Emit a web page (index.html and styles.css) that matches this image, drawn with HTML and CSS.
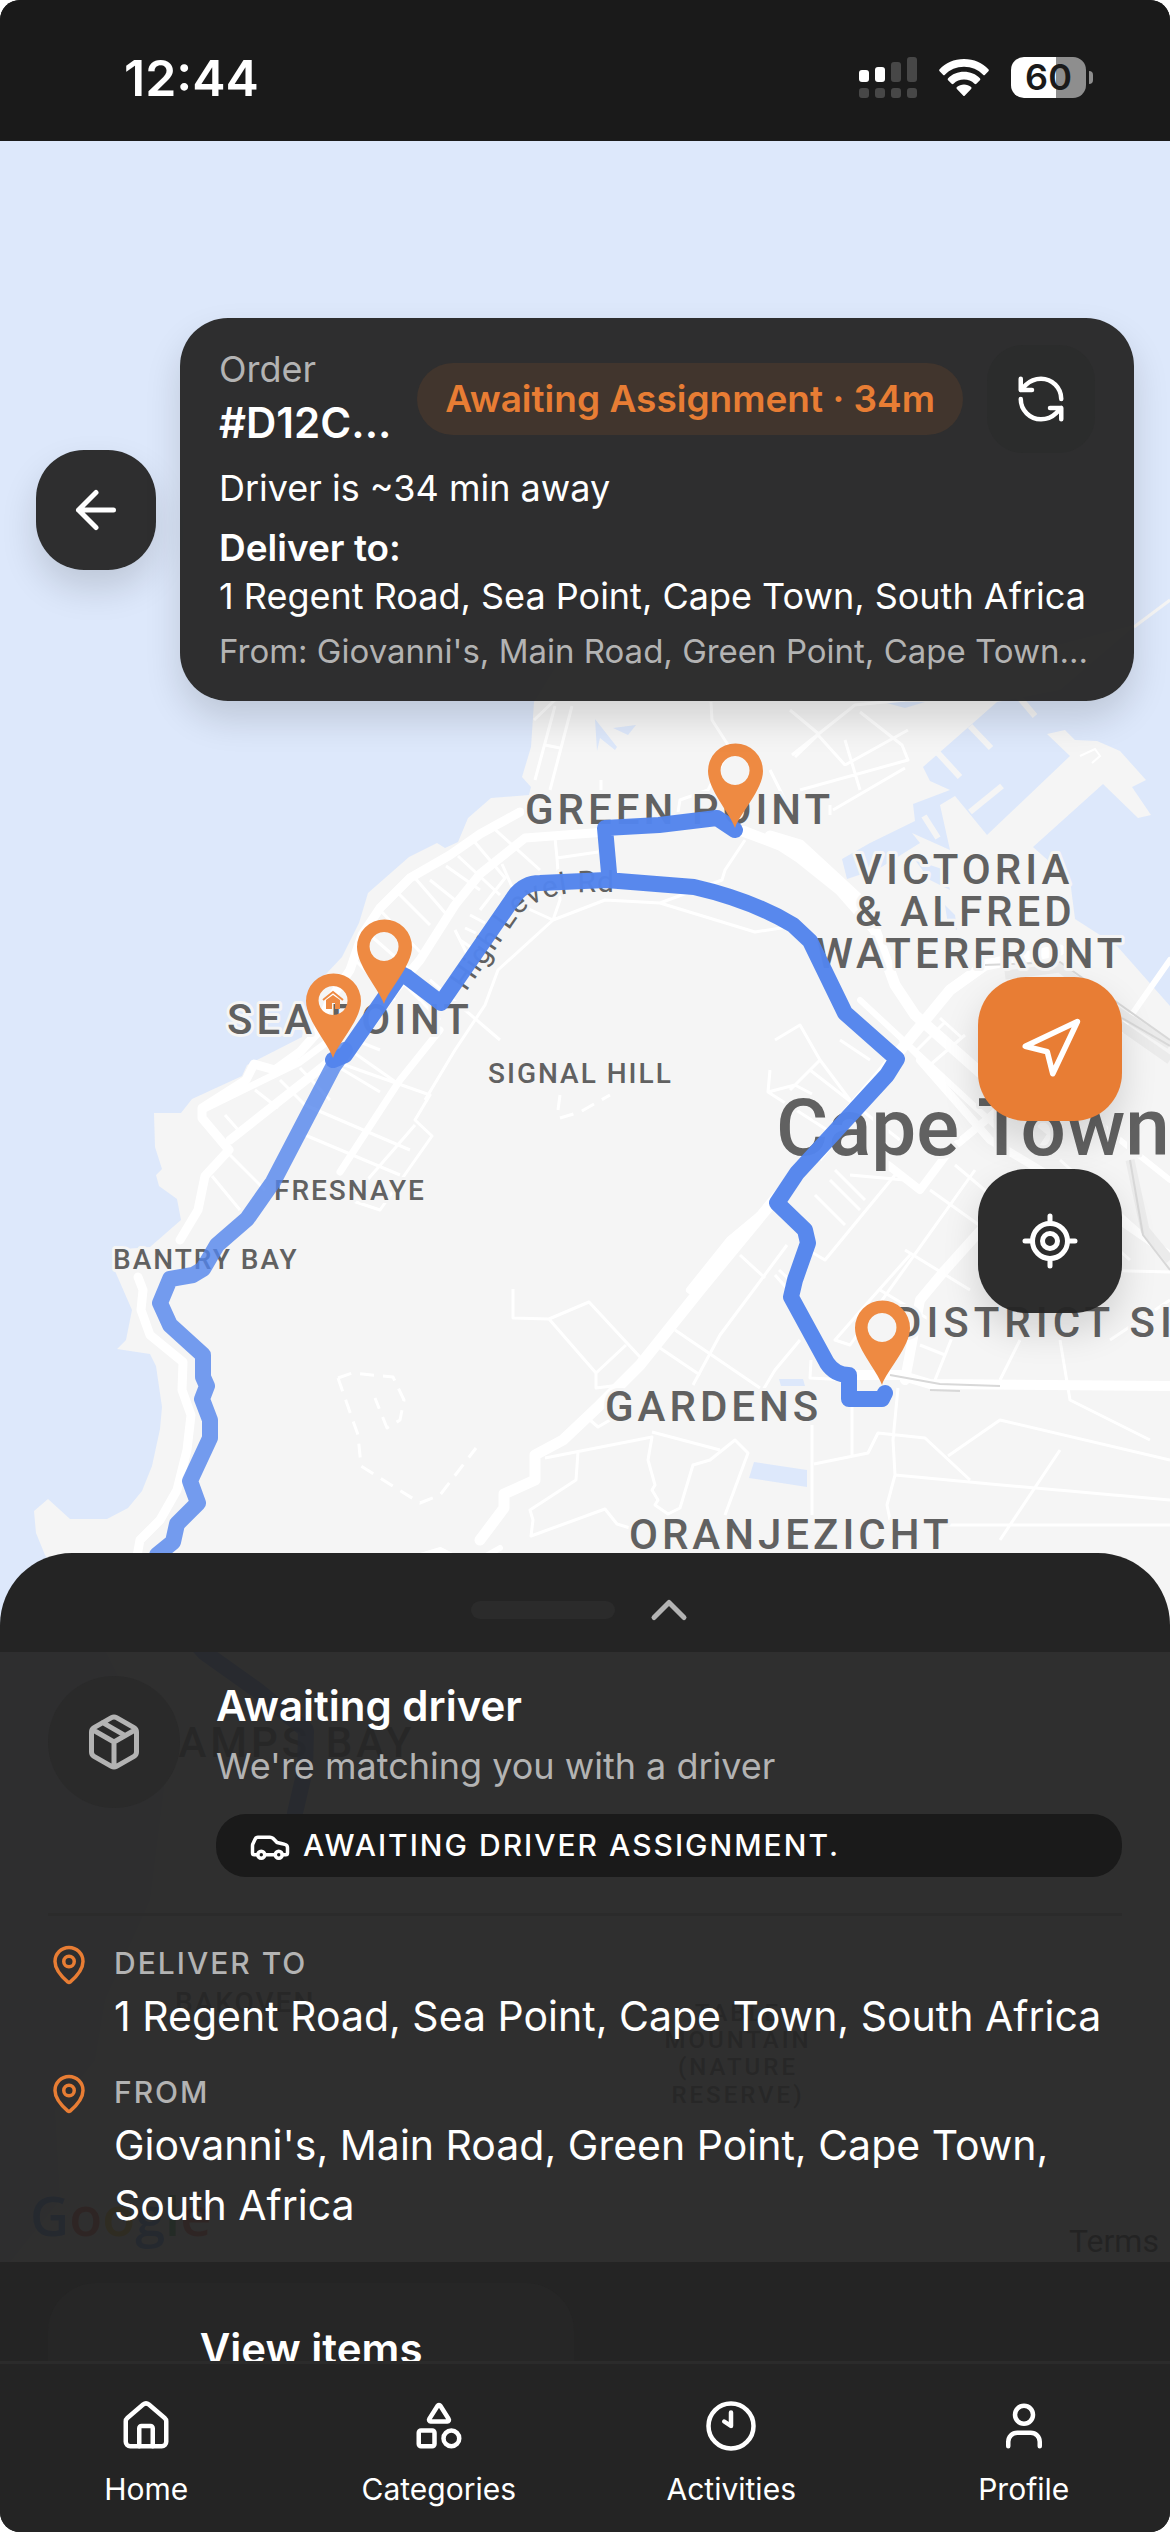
FILE: index.html
```html
<!DOCTYPE html>
<html lang="en">
<head>
  <meta charset="UTF-8">
  <meta name="viewport" content="width=device-width, initial-scale=1.0">
  <title>Track Order</title>
  <link rel="stylesheet" href="styles.css">
</head>
<body>
  <div class="app">
    <header class="status-bar">
      <span class="time">12:44</span>
      <div class="status-icons">
        <svg width="58" height="42" viewBox="0 0 58 42">
          <g fill="#fff">
            <rect x="0" y="13" width="10" height="12" rx="3"/>
            <rect x="16" y="10" width="10" height="15" rx="3"/>
          </g>
          <g fill="#474747">
            <rect x="32" y="5" width="10" height="20" rx="3"/>
            <rect x="48" y="0" width="10" height="25" rx="3"/>
            <rect x="0" y="31" width="10" height="10" rx="3"/>
            <rect x="16" y="31" width="10" height="10" rx="3"/>
            <rect x="32" y="31" width="10" height="10" rx="3"/>
            <rect x="48" y="31" width="10" height="10" rx="3"/>
          </g>
        </svg>
        <svg width="50" height="38" viewBox="0 0 50 38" fill="#fff">
          <path d="M25 0C15 0 6.500 4 .6 10.300a1.500 1.500 0 0 0 0 2l3.400 3.400a1.300 1.300 0 0 0 1.900 0C10.800 10.700 17.500 7.800 25 7.800s14.200 2.900 19.100 7.900a1.300 1.300 0 0 0 1.900 0l3.400-3.400a1.500 1.500 0 0 0 0-2C43.500 4 35 0 25 0z"/>
          <path d="M25 12.800c-6.200 0-11.800 2.400-15.900 6.400a1.400 1.400 0 0 0 0 2l3.500 3.500a1.400 1.400 0 0 0 1.900 0A15 15 0 0 1 25 20.500a15 15 0 0 1 10.500 4.200 1.400 1.400 0 0 0 1.900 0l3.500-3.500a1.400 1.400 0 0 0 0-2c-4.100-4-9.700-6.400-15.900-6.400z"/>
          <path d="M25 25.500c-2.700 0-5.200 1-7.100 2.600a1.200 1.200 0 0 0 0 1.800l6.200 6.500a1.200 1.200 0 0 0 1.800 0l6.200-6.500a1.200 1.200 0 0 0 0-1.800c-1.900-1.600-4.400-2.600-7.100-2.600z"/>
        </svg>
        <div class="battery"><span class="battery-level">60</span></div>
      </div>
    </header>

    <main class="tracking">
      <svg class="map" viewBox="0 141 1170 2220" preserveAspectRatio="xMidYMin slice">
        <defs>
          <path id="highLevel" d="M466 992L520 914Q544 892 590 892L650 892"/>
          <g id="pin">
            <path fill="#ee8a42" fill-rule="evenodd" d="M0 0C-5-15-27-38-27-57a27.500 27.500 0 0 1 55 0C28-38 5-15 0 0zM0-72a14.500 14.500 0 1 0 .1 0z"/>
          </g>
        </defs>

        <!-- land -->
        <path fill="#f5f5f5" d="M534 702L531 747 522 777 531 787 529 795 491 798 468 818 458 842 445 848 437 843 409 857 368 893 359 923 342 957 311 990 302 1037 247 1065 242 1076 192 1099 181 1113 154 1113 155 1147 162 1169 156 1175 159 1186 177 1199 181 1220 150 1247 112 1250 115 1271 132 1310 126 1340 117 1349 150 1354 156 1366 162 1407 160 1429 152 1466 142 1491 128 1508 107 1519 70 1519 48 1499 34 1511 36 1533 45 1555 90 1620 130 1700 165 1780 150 1900 105 2000 95 2060 55 2110 60 2200 10 2262V2361H1170V640L1134 625 1000 660H560z"/>
        <!-- sea and water -->
        <g fill="#dde8fb">
          <path d="M1170 600L1130 630 1060 690 997 702 923 767 930 781 950 790 913 804 915 821 870 843 842 859 847 879 880 868 920 843 912 833 950 850 940 805 955 796 987 835 1070 756 1047 734 1065 730 1075 740 1097 741 1120 751 1146 780 1132 787 1151 815 1138 818 1103 784 1033 847 1070 880 1075 919 1117 946 1170 1006z"/>
          <path d="M595 719L617 747 615 750 600 738 597 751zM613 728L636 725 628 735zM883 702H925L905 708z"/>
          <path d="M754 1462L807 1470V1487L749 1478zM779 1379H803L805 1386H781z"/>
          <path d="M915 860L945 870 950 890 930 880zM945 905L955 915 957 930 948 925z"/>
        </g>
        <g stroke="#f5f5f5" stroke-width="5" fill="none">
          <path d="M1018 696L1035 716M970 726L991 748M937 752L960 777M970 812L1002 786M924 816L938 838" stroke-width="6"/>
          <path d="M1080 756L1095 749 1100 756 1092 763" stroke="#fff" stroke-width="2"/>
          <path d="M1134 627L1170 600" stroke-width="3"/>
        </g>

        <!-- main roads -->
        <g fill="none" stroke="#fff" stroke-linejoin="round" stroke-linecap="round">
          <path stroke-width="9" d="M520 812L480 834 450 855 410 878 380 908 362 935 350 970 330 1000 316 1034 300 1052 275 1070 254 1064 246 1080 202 1108 202 1118 229 1150 205 1176 198 1210 180 1240M138 1277L143 1290 141 1310 150 1335 183 1362 182 1390 191 1415 187 1450 177 1490 160 1520 140 1540 137 1556"/>
          <path stroke-width="9" d="M606 832L525 838 480 874 455 905 420 960 395 990 360 1040 325 1065 230 1140"/>
          <path stroke-width="7" d="M440 1030L400 1080 340 1172M202 1110L300 1062 330 1040"/>
          <path stroke-width="11" d="M740 830L780 845 800 858 840 890 875 930 895 985 915 1015 1000 1090 1050 1130M770 836L800 845 865 905"/>
          <path stroke-width="11" d="M480 1540L504 1508V1494L535 1480 535 1455 563 1440 600 1405 640 1365 700 1290 770 1205 880 1075 950 990 985 965 1060 950"/>
          <path stroke-width="8" d="M690 1290L730 1240 760 1215M888 1165L920 1190 950 1150 1010 1100M1170 1255L1090 1200 990 1140 920 1060"/>
          <path stroke-width="10" d="M850 1375H900L930 1384 1170 1386M905 1380L920 1300 945 1270 990 1220 1060 1180"/>
          <path stroke-width="6" d="M1170 960L1100 1060 1040 1150M1020 1060L1170 1180M860 1000L1000 1130M400 1562L440 1550 470 1565 500 1548"/>
        </g>

        <!-- streets -->
        <g fill="none" stroke="#fff" stroke-width="3" stroke-linejoin="round">
          <path d="M534 720L555 700 620 690M555 706L535 780M572 706L550 790M545 745L560 748M711 702L712 720 730 748 708 790 680 800 678 812M601 780V790M792 755L855 705 905 700M795 757L818 735 845 765M800 790L908 760 902 745 860 712M845 765L908 730M833 810L905 768M860 790L845 740M830 815V805M820 735L790 710M785 800L770 770"/>
          <path d="M490 825L540 870M473 840L505 878 480 910M458 856L500 895M446 866L480 890M430 880L455 900M415 878L447 915M398 893L430 925M380 910L420 952M370 935L410 970M355 960L395 1000M502 864L520 905 553 920 605 900 660 903 755 932 800 925M555 838L557 858 598 852M557 858L560 900 553 920M745 840L725 870 722 880 660 903M553 920L498 970 485 1005 455 1050 425 1100"/>
          <path d="M470 915L485 923M465 928L480 935M460 940L475 950M455 930L470 960M430 980L500 1040M405 985L440 1020M350 1050L400 1085M335 1065L380 1092M300 1068L330 1100M280 1080L305 1105 410 1150M325 1058L430 1095 415 1120 432 1136 380 1210 350 1200 415 1125M305 1135L400 1175M225 1115L240 1132M255 1090L278 1108M212 1176L240 1210M230 1155L265 1190M355 1040L380 1050"/>
          <path d="M770 1070L768 1092 795 1085 812 1094M768 1092L835 1135M775 1040L800 1025 820 1060 850 1100M820 1060L790 1090M810 1070L900 1140M840 1040L870 1060M860 1110L820 1160M850 1175L905 1180M830 1180L860 1210M835 1170L865 1200M815 1195L845 1225M895 1175L825 1260 808 1250M975 1170L850 1345 835 1340M930 1190L1000 1240M955 1165L1020 1220M905 1250L970 1290M880 1290L930 1320M910 1255L870 1300 835 1340 850 1345M740 1255L765 1278M787 1245L720 1335 693 1385M779 1270L795 1285M775 1275L790 1292M800 1340L775 1370 763 1390"/>
          <path d="M513 1289V1318L549 1319 589 1302 640 1357M549 1319L596 1373 626 1345M596 1373V1388L620 1385M675 1330L760 1388M660 1348L700 1375M545 1458L652 1437 648 1460 655 1485 652 1490 658 1500 655 1505 668 1514 680 1508 693 1465 710 1460 735 1440 748 1453 725 1515M578 1452L576 1480 530 1510 533 1520 531 1536 605 1509 617 1524 630 1528M652 1432L720 1450M812 1425V1515M814 1464L868 1453 878 1433 925 1438 970 1480M852 1405V1455M898 1388L893 1440 895 1475 887 1505 890 1520M895 1475L980 1483 1170 1500M948 1456L1000 1420 1170 1460M850 1380L810 1378 811 1360M590 1420L598 1427 610 1420M940 1525H1170M1000 1540L1060 1450M1020 1340L1000 1380M955 1330L935 1380M920 1345L945 1355M1060 1340L1070 1400 1150 1440"/>
          <path d="M900 1040L920 1060M930 1030L950 1050M940 1018L962 1038M915 1052L945 1022M930 1065L965 1035M1040 1180L1130 1260M1060 1160L1150 1240M1110 1340L1170 1300M1030 1250L1090 1300M1090 1270L1170 1272M560 1095L558 1110"/>
          <path stroke-dasharray="14 9" d="M338 1378L352 1373 393 1377 404 1400 400 1420 387 1428 375 1398M338 1378L358 1435 361 1466 420 1503 440 1495 476 1448M560 1118L580 1112 610 1095"/>
          <path d="M130 1660L180 1720 200 1800 170 1900 175 2060M220 1660L260 1760 200 1820M360 1660L350 1760 260 1860 230 2000"/>
        </g>
        <!-- rail lines -->
        <g fill="none" stroke="#ebebeb" stroke-width="9" stroke-linejoin="round">
          <path d="M1005 975L1060 968 1100 1000 1170 1045M1130 1160L1145 1230 1170 1260M1120 1025L1170 1060"/>
          <path stroke="#d8d8d8" stroke-width="2" d="M890 1375L940 1384 1000 1386M930 1390L960 1391M985 965L1060 962 1170 1040M1122 1018L1170 1046M1130 1160L1143 1235 1170 1270"/>
        </g>

        <g class="labels">
          <text x="525" y="824">GREEN POINT</text>
          <text x="855" y="884">VICTORIA</text>
          <text x="855" y="926">&amp; ALFRED</text>
          <text x="816" y="968">WATERFRONT</text>
          <text x="227" y="1034">SEA POINT</text>
          <text class="wide" x="894" y="1337">DISTRICT SIX</text>
          <text x="605" y="1421">GARDENS</text>
          <text x="629" y="1549">ORANJEZICHT</text>
          <text x="147" y="1757">CAMPS BAY</text>
          <text class="city" x="776" y="1155">Cape Town</text>
          <text class="small" x="488" y="1083">SIGNAL HILL</text>
          <text class="small" x="274" y="1200">FRESNAYE</text>
          <text class="small" x="113" y="1269">BANTRY BAY</text>
          <text class="small" x="175" y="2012">BAKOVEN</text>
          <g class="reserve">
            <text x="738" y="2021">TABLE</text>
            <text x="738" y="2048">MOUNTAIN</text>
            <text x="738" y="2075">(NATURE</text>
            <text x="738" y="2103">RESERVE)</text>
          </g>
          <text class="street"><textPath href="#highLevel">High Level Rd</textPath></text>
        </g>

        <!-- routes -->
        <g fill="none" stroke="#5384ec" stroke-width="16" stroke-linejoin="round" stroke-linecap="round">
          <path opacity=".8" d="M345 1050L333 1067 273 1182 247 1219 217 1245 203 1269 193 1275 170 1279 160 1303 170 1325 203 1355V1377L207 1386 202 1399 210 1420V1438L190 1481 198 1503 177 1524 173 1542 157 1555 175 1620 205 1653 257 1690 306 1730 305 1770 295 1813"/>
          <path opacity=".97" d="M333 1060L345 1055 401 974 407 977 441 1003 512 900 Q522 883 540 883L606 880 694 887 Q751 900 793 925L810 941 845 1013 897 1059 887 1075 797 1173 777 1203 805 1230 808 1243 795 1280 791 1297 827 1363Q835 1375 849 1375V1399H882L885 1393M735 830L717 818 659 825 605 828 609 873"/>
        </g>

        <use href="#pin" x="735" y="828"/>
        <use href="#pin" x="384" y="1004"/>
        <use href="#pin" x="333" y="1058"/>
        <use href="#pin" x="882" y="1385"/>
        <g fill="none" stroke="#ee8a42" stroke-width="2">
          <path d="M323 1000L333 992 343 1000"/>
          <path fill="#ee8a42" stroke="none" d="M326 1000L333 995 340 1000V1009H335V1003H332V1009H326z"/>
        </g>

        <text class="logo" x="30" y="2236"><tspan fill="#4285f4">G</tspan><tspan fill="#ea4335">o</tspan><tspan fill="#fbbc05">o</tspan><tspan fill="#4285f4">g</tspan><tspan fill="#34a853">l</tspan><tspan fill="#ea4335">e</tspan></text>
        <text class="terms" x="1069" y="2252">Terms</text>
      </svg>

      <section class="top-row">
        <button class="back" type="button" aria-label="Back">
          <svg class="icon" width="60" height="60" viewBox="0 0 24 24"><path d="m12 19-7-7 7-7M19 12H5"/></svg>
        </button>
        <div class="order-card">
          <div class="order-head">
            <div class="order-id">
              <span>Order</span>
              <strong>#D12C...</strong>
            </div>
            <span class="badge">Awaiting Assignment · 34m</span>
            <button class="refresh" type="button" aria-label="Refresh">
              <svg class="icon" width="54" height="54" viewBox="0 0 24 24"><path d="M21 12a9 9 0 0 0-9-9 9.750 9.750 0 0 0-6.740 2.740L3 8M3 3v5h5M3 12a9 9 0 0 0 9 9 9.750 9.750 0 0 0 6.740-2.740L21 16M16 16h5v5"/></svg>
            </button>
          </div>
          <p class="eta">Driver is ~34 min away</p>
          <p class="deliver"><strong>Deliver to:</strong><br>1 Regent Road, Sea Point, Cape Town, South Africa</p>
          <p class="from">From: Giovanni's, Main Road, Green Point, Cape Town...</p>
        </div>
      </section>

      <div class="map-buttons">
        <button class="fab fab-orange" type="button" aria-label="Navigate">
          <svg class="icon" width="66" height="66" viewBox="0 0 24 24"><path d="M3 11 22 2 13 21 11 13z"/></svg>
        </button>
        <button class="fab" type="button" aria-label="Center map">
          <svg class="icon" width="60" height="60" viewBox="0 0 24 24"><path d="M2 12h3M19 12h3M12 2v3M12 19v3"/><circle cx="12" cy="12" r="7"/><circle cx="12" cy="12" r="3"/></svg>
        </button>
      </div>

      <section class="sheet">
        <button class="sheet-header" type="button" aria-label="Expand details">
          <span class="handle"></span>
          <svg class="icon" width="60" height="60" viewBox="0 0 24 24"><path d="m18 15-6-6-6 6"/></svg>
        </button>
        <div class="sheet-body">
          <div class="driver">
            <div class="driver-icon">
              <svg class="icon" width="60" height="60" viewBox="0 0 24 24"><path d="M11 21.730a2 2 0 0 0 2 0l7-4A2 2 0 0 0 21 16V8a2 2 0 0 0-1-1.730l-7-4a2 2 0 0 0-2 0l-7 4A2 2 0 0 0 3 8v8a2 2 0 0 0 1 1.730zM12 22V12M3.290 7 12 12l8.710-5M7.500 4.270l9 5.150"/></svg>
            </div>
            <div class="driver-info">
              <h2>Awaiting driver</h2>
              <p>We're matching you with a driver</p>
              <div class="driver-status">
                <svg class="icon" width="42" height="42" viewBox="0 0 24 24"><path d="M19 17h2c.6 0 1-.4 1-1v-3c0-.9-.7-1.700-1.500-1.900C18.700 10.600 16 10 16 10s-1.300-1.400-2.200-2.300c-.5-.4-1.100-.7-1.800-.7H5c-.6 0-1.100.4-1.400.9l-1.400 2.900A3.700 3.700 0 0 0 2 12v4c0 .6.4 1 1 1h2M9 17h6"/><circle cx="7" cy="17" r="2"/><circle cx="17" cy="17" r="2"/></svg>
                <span>AWAITING DRIVER ASSIGNMENT.</span>
              </div>
            </div>
          </div>
          <hr>
          <div class="stops">
            <div class="stop">
              <svg class="icon" width="42" height="42" viewBox="0 0 24 24"><path d="M20 10c0 5-5.540 10.190-7.400 11.800a1 1 0 0 1-1.200 0C9.540 20.190 4 15 4 10a8 8 0 0 1 16 0"/><circle cx="12" cy="10" r="3"/></svg>
              <div>
                <h3>DELIVER TO</h3>
                <p>1 Regent Road, Sea Point, Cape Town, South Africa</p>
              </div>
            </div>
            <div class="stop">
              <svg class="icon" width="42" height="42" viewBox="0 0 24 24"><path d="M20 10c0 5-5.540 10.190-7.400 11.800a1 1 0 0 1-1.200 0C9.540 20.190 4 15 4 10a8 8 0 0 1 16 0"/><circle cx="12" cy="10" r="3"/></svg>
              <div>
                <h3>FROM</h3>
                <p>Giovanni's, Main Road, Green Point, Cape Town, South Africa</p>
              </div>
            </div>
          </div>
        </div>
        <div class="sheet-actions">
          <button type="button">View items</button>
        </div>
      </section>
    </main>

    <nav class="tabs">
      <a href="#">
        <svg class="icon" width="54" height="54" viewBox="0 0 24 24"><path d="M15 21v-8a1 1 0 0 0-1-1h-4a1 1 0 0 0-1 1v8"/><path d="M3 10a2 2 0 0 1 .709-1.528l7-6a2 2 0 0 1 2.582 0l7 6A2 2 0 0 1 21 10v9a2 2 0 0 1-2 2H5a2 2 0 0 1-2-2z"/></svg>
        Home
      </a>
      <a href="#">
        <svg class="icon" width="54" height="54" viewBox="0 0 24 24"><path d="M8.300 10a.7.7 0 0 1-.626-1.079L11.400 3a.7.7 0 0 1 1.198-.043L16.300 8.900a.7.7 0 0 1-.572 1.100z"/><rect x="3" y="14" width="7" height="7" rx="1"/><circle cx="17.500" cy="17.500" r="3.500"/></svg>
        Categories
      </a>
      <a href="#">
        <svg class="icon" width="54" height="54" viewBox="0 0 24 24"><circle cx="12" cy="12" r="10"/><path d="M12 6v6L9 10"/></svg>
        Activities
      </a>
      <a href="#">
        <svg class="icon" width="54" height="54" viewBox="0 0 24 24"><circle cx="12" cy="7" r="4"/><path d="M19 21v-2a4 4 0 0 0-4-4H9a4 4 0 0 0-4 4v2"/></svg>
        Profile
      </a>
    </nav>
  </div>
</body>
</html>
```
FILE: styles.css
```css
* {
  box-sizing: border-box;
}
body {
  margin: 0;
  background: #fff;
  font-family: Inter, "Liberation Sans", sans-serif;
  color: #fff;
}
h2, h3, p {
  margin: 0;
}
button {
  border: none;
  padding: 0;
  color: #fff;
  font-family: inherit;
  cursor: pointer;
  display: flex;
  align-items: center;
  justify-content: center;
}
.icon {
  display: block;
  flex: none;
  fill: none;
  stroke: currentColor;
  stroke-width: 2;
  stroke-linecap: round;
  stroke-linejoin: round;
}
.app {
  min-height: 100vh;
  display: flex;
  flex-direction: column;
  background: #242424;
  border-radius: 20px;
  overflow: hidden;
}

/* status bar */
.status-bar {
  height: 141px;
  padding: 14px 76px 0 124px;
  display: flex;
  align-items: center;
  justify-content: space-between;
  background: #1a1a1a;
}
.time {
  font-size: 50px;
  font-weight: 600;
}
.status-icons {
  display: flex;
  align-items: center;
  gap: 22px;
}
.battery {
  position: relative;
  width: 75px;
  height: 41px;
  margin-right: 8px;
  border-radius: 13px;
  background: linear-gradient(to right, #fff 60%, #8e8e8e 60%);
  color: #1a1a1a;
  text-align: center;
}
.battery::after {
  content: "";
  position: absolute;
  left: 78px;
  top: 14px;
  width: 4px;
  height: 13px;
  border-radius: 0 4px 4px 0;
  background: #8e8e8e;
}
.battery-level {
  font-size: 36px;
  line-height: 41px;
  font-weight: 600;
}

/* map */
.tracking {
  position: relative;
  flex: 1;
  display: flex;
  flex-direction: column;
  background: #dde8fb;
}
.map {
  position: absolute;
  inset: 0;
  width: 100%;
  height: 100%;
}
.labels text {
  font-family: Roboto, sans-serif;
  font-size: 42px;
  font-weight: 500;
  letter-spacing: 4px;
  fill: #616161;
  stroke: #f5f5f5;
  stroke-width: 6px;
  stroke-linejoin: round;
  paint-order: stroke;
}
.labels .wide {
  letter-spacing: 5px;
}
.labels .small {
  font-size: 28px;
  letter-spacing: 2px;
}
.labels .reserve text {
  font-size: 24px;
  letter-spacing: 3px;
  text-anchor: middle;
}
.labels .city {
  font-size: 80px;
  letter-spacing: 0;
}
.labels .street {
  font-size: 30px;
  font-weight: 400;
  letter-spacing: 1px;
}
.logo {
  font-family: "Open Sans", sans-serif;
  font-size: 54px;
  font-weight: 600;
}
.terms {
  font-family: Roboto, sans-serif;
  font-size: 32px;
  fill: #222;
}

/* order card */
.top-row {
  position: relative;
  display: flex;
  align-items: center;
  gap: 24px;
  padding: 177px 36px 0;
}
.back {
  flex: none;
  width: 120px;
  height: 120px;
  border-radius: 48px;
  background: rgba(36, 36, 36, .95);
  box-shadow: 0 18px 36px rgba(0, 0, 0, .14);
}
.order-card {
  flex: 1;
  min-width: 0;
  padding: 27px 39px;
  border-radius: 48px;
  background: rgba(36, 36, 36, .95);
  box-shadow: 0 18px 36px rgba(0, 0, 0, .14);
  font-size: 36px;
  line-height: 48px;
}
.order-head {
  display: flex;
  align-items: center;
  gap: 24px;
}
.order-id {
  flex: 1;
  min-width: 0;
  display: flex;
  flex-direction: column;
}
.order-id span {
  color: #b3b3b3;
}
.order-id strong {
  font-size: 42px;
  font-weight: 600;
  line-height: 60px;
}
.badge {
  padding: 12px 28px;
  border-radius: 36px;
  background: #41352d;
  color: #e87d34;
  font-size: 37px;
  font-weight: 600;
  white-space: nowrap;
}
.refresh {
  width: 108px;
  height: 108px;
  border-radius: 36px;
  background: #2b2c2c;
}
.eta {
  margin-top: 11px;
}
.deliver {
  margin-top: 12px;
}
.deliver strong {
  font-size: 37px;
  font-weight: 600;
}
.from {
  margin-top: 9px;
  color: #b3b3b3;
  font-size: 33px;
  line-height: 45px;
  white-space: nowrap;
  overflow: hidden;
  text-overflow: ellipsis;
}

/* floating buttons */
.map-buttons {
  position: relative;
  display: flex;
  flex-direction: column;
  align-items: flex-end;
  gap: 48px;
  padding: 276px 48px 0;
}
.fab {
  width: 144px;
  height: 144px;
  border-radius: 48px;
  background: rgba(36, 36, 36, .96);
  box-shadow: 0 18px 36px rgba(0, 0, 0, .14);
}
.fab-orange {
  background: #e87d34;
}

/* bottom sheet */
.sheet {
  position: relative;
  margin-top: auto;
  border-radius: 72px 72px 0 0;
  overflow: hidden;
}
.sheet-header {
  width: 100%;
  height: 99px;
  gap: 24px;
  padding-top: 15px;
  background: #242424;
  color: #b3b3b3;
}
.handle {
  width: 144px;
  height: 18px;
  border-radius: 9px;
  background: #2b2b2b;
}
.sheet-body {
  padding: 24px 48px 27px;
  background: rgba(36, 36, 36, .95);
}
.driver {
  display: flex;
  align-items: flex-start;
  gap: 36px;
}
.driver-icon {
  flex: none;
  width: 132px;
  height: 132px;
  border-radius: 50%;
  background: #2a2a2a;
  color: #b3b3b3;
  display: flex;
  align-items: center;
  justify-content: center;
}
.driver-info {
  flex: 1;
}
.driver-info h2 {
  font-size: 42px;
  font-weight: 600;
  line-height: 60px;
}
.driver-info p {
  margin-top: 6px;
  color: #b3b3b3;
  font-size: 36px;
  line-height: 48px;
}
.driver-status {
  display: flex;
  align-items: center;
  gap: 12px;
  margin-top: 24px;
  padding: 9px 33px;
  border-radius: 30px;
  background: #1a1a1a;
  font-size: 30px;
  font-weight: 500;
  line-height: 45px;
  letter-spacing: 2px;
}
hr {
  margin: 36px 0 28px;
  border: none;
  border-top: 3px solid #2b2b2b;
}
.stops {
  display: flex;
  flex-direction: column;
  gap: 27px;
}
.stop {
  display: flex;
  align-items: flex-start;
  gap: 24px;
}
.stop .icon {
  color: #e87d34;
}
.stop h3 {
  margin-bottom: 3px;
  color: #b3b3b3;
  font-size: 30px;
  font-weight: 500;
  line-height: 39px;
  letter-spacing: 2px;
}
.stop p {
  font-size: 41px;
  line-height: 60px;
}
.sheet-actions {
  height: 99px;
  padding: 21px 48px 0;
  background: #242424;
  overflow: hidden;
}
.sheet-actions button {
  width: 49%;
  height: 130px;
  border-radius: 48px;
  background: #262626;
  font-size: 42px;
  font-weight: 600;
}

/* bottom tabs */
.tabs {
  display: grid;
  grid-template-columns: repeat(4, 1fr);
  padding: 35px 0 25px;
  border-top: 3px solid #2b2b2b;
  background: #242424;
}
.tabs a {
  display: flex;
  flex-direction: column;
  align-items: center;
  gap: 18px;
  color: #fff;
  font-size: 30px;
  line-height: 36px;
  text-decoration: none;
}
```
